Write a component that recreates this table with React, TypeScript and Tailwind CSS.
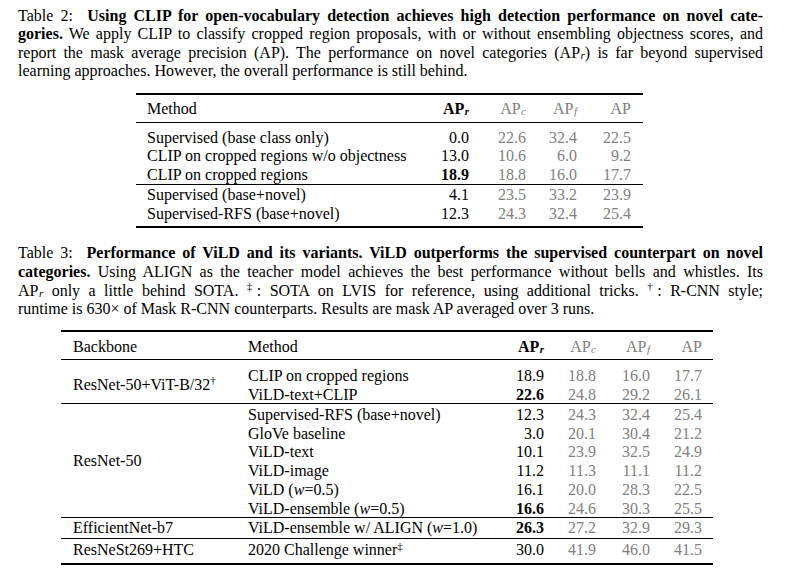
import React from "react";

const G = "text-[#808080]";

function Sub({ c }: { c: string }) {
  return <sub className="italic text-[11px] relative top-[1px] align-baseline ml-[0.5px]">{c}</sub>;
}

function AP({ s }: { s: string }) {
  return (
    <span>
      AP<Sub c={s} />
    </span>
  );
}

function Line({ children, last }: { children: React.ReactNode; last?: boolean }) {
  return (
    <div className={last ? "text-left" : "text-justify [text-align-last:justify]"}>{children}</div>
  );
}

type R2 = { m: string; r: string; rb?: boolean; c: string; f: string; a: string };

const t2g1: R2[] = [
  { m: "Supervised (base class only)", r: "0.0", c: "22.6", f: "32.4", a: "22.5" },
  { m: "CLIP on cropped regions w/o objectness", r: "13.0", c: "10.6", f: "6.0", a: "9.2" },
  { m: "CLIP on cropped regions", r: "18.9", rb: true, c: "18.8", f: "16.0", a: "17.7" },
];
const t2g2: R2[] = [
  { m: "Supervised (base+novel)", r: "4.1", c: "23.5", f: "33.2", a: "23.9" },
  { m: "Supervised-RFS (base+novel)", r: "12.3", c: "24.3", f: "32.4", a: "25.4" },
];

function Row2({ row }: { row: R2 }) {
  return (
    <div className="flex h-[18.8px] pt-[1.5px] leading-[18.8px]">
      <div className="w-[294px] pl-[11px] whitespace-nowrap">{row.m}</div>
      <div className={"w-[39px] text-right " + (row.rb ? "font-bold" : "")}>{row.r}</div>
      <div className={"w-[57px] text-right " + G}>{row.c}</div>
      <div className={"w-[51px] text-right " + G}>{row.f}</div>
      <div className={"w-[54px] text-right " + G}>{row.a}</div>
    </div>
  );
}

type R3 = { m: React.ReactNode; r: string; rb?: boolean; c: string; f: string; a: string };

function Row3({ row }: { row: R3 }) {
  return (
    <div className="flex h-[18.75px] pt-[1.5px] leading-[18.75px]">
      <div className="w-[268px] pl-[12px] whitespace-nowrap">{row.m}</div>
      <div className={"w-[40px] text-right " + (row.rb ? "font-bold" : "")}>{row.r}</div>
      <div className={"w-[52px] text-right " + G}>{row.c}</div>
      <div className={"w-[54px] text-right " + G}>{row.f}</div>
      <div className={"w-[52px] text-right " + G}>{row.a}</div>
    </div>
  );
}

function W() {
  return <span className="italic">w</span>;
}

function Group3({
  backbone,
  rows,
  className,
}: {
  backbone: React.ReactNode;
  rows: R3[];
  className?: string;
}) {
  return (
    <div className={"flex " + (className || "")}>
      <div className="w-[175px] pl-[12px] pt-[1.5px] leading-[18.75px] flex items-center whitespace-nowrap">
        {backbone}
      </div>
      <div className="flex flex-col">
        {rows.map((r, i) => (
          <Row3 key={i} row={r} />
        ))}
      </div>
    </div>
  );
}

export default function App() {
  return (
    <div className="w-[798px] h-[575px] bg-white text-black font-['Liberation_Serif','Times_New_Roman',serif] text-[16px] overflow-hidden">
      <div className="pl-[18px] pt-[7px] w-[763px]">
        {/* Caption 2 */}
        <div className="leading-[18.35px] w-[745px]">
          <Line>
            Table 2:&nbsp; <b>Using CLIP for open-vocabulary detection achieves high detection performance on novel cate-</b>
          </Line>
          <Line>
            <b>gories.</b> We apply CLIP to classify cropped region proposals, with or without ensembling objectness scores, and
          </Line>
          <Line>
            report the mask average precision (AP). The performance on novel categories (<AP s="r" />) is far beyond supervised
          </Line>
          <Line last>learning approaches. However, the overall performance is still behind.</Line>
        </div>

        {/* Table 2 */}
        <div className="ml-[118px] mt-[12.5px] w-[507px] border-t-2 border-b-2 border-black pb-[4px]">
          <div className="flex leading-[18.8px] pt-[5.5px] pb-[3px] border-b border-black">
            <div className="w-[294px] pl-[11px]">Method</div>
            <div className="w-[39px] text-right font-bold">
              <AP s="r" />
            </div>
            <div className={"w-[57px] text-right " + G}>
              <AP s="c" />
            </div>
            <div className={"w-[51px] text-right " + G}>
              <AP s="f" />
            </div>
            <div className={"w-[54px] text-right " + G}>AP</div>
          </div>
          <div className="pt-[4px] border-b border-black">
            {t2g1.map((r, i) => (
              <Row2 key={i} row={r} />
            ))}
          </div>
          <div>
            {t2g2.map((r, i) => (
              <Row2 key={i} row={r} />
            ))}
          </div>
        </div>

        {/* Caption 3 */}
        <div className="leading-[18.67px] w-[745px] mt-[16px]">
          <Line>
            Table 3:&nbsp; <b>Performance of ViLD and its variants. ViLD outperforms the supervised counterpart on novel</b>
          </Line>
          <Line>
            <b>categories.</b> Using ALIGN as the teacher model achieves the best performance without bells and whistles. Its
          </Line>
          <Line>
            <AP s="r" /> only a little behind SOTA. <sup className="text-[11px]">‡</sup>: SOTA on LVIS for reference, using additional tricks. <sup className="text-[11px]">†</sup>: R-CNN style;
          </Line>
          <Line last>runtime is 630× of Mask R-CNN counterparts. Results are mask AP averaged over 3 runs.</Line>
        </div>

        {/* Table 3 */}
        <div className="ml-[43px] mt-[11.5px] w-[652px] border-t-2 border-b-2 border-black pb-[3px]">
          <div className="flex leading-[18.8px] pt-[5.3px] pb-[3px] border-b border-black">
            <div className="w-[175px] pl-[12px]">Backbone</div>
            <div className="w-[268px] pl-[12px]">Method</div>
            <div className="w-[40px] text-right font-bold">
              <AP s="r" />
            </div>
            <div className={"w-[52px] text-right " + G}>
              <AP s="c" />
            </div>
            <div className={"w-[54px] text-right " + G}>
              <AP s="f" />
            </div>
            <div className={"w-[52px] text-right " + G}>AP</div>
          </div>
          <Group3
            className="pt-[5px] pb-[0.5px] border-b border-black"
            backbone={
              <span>
                ResNet-50+ViT-B/32<sup className="text-[11px]">†</sup>
              </span>
            }
            rows={[
              { m: "CLIP on cropped regions", r: "18.9", c: "18.8", f: "16.0", a: "17.7" },
              { m: "ViLD-text+CLIP", r: "22.6", rb: true, c: "24.8", f: "29.2", a: "26.1" },
            ]}
          />
          <Group3
            className="border-b border-black"
            backbone="ResNet-50"
            rows={[
              { m: "Supervised-RFS (base+novel)", r: "12.3", c: "24.3", f: "32.4", a: "25.4" },
              { m: "GloVe baseline", r: "3.0", c: "20.1", f: "30.4", a: "21.2" },
              { m: "ViLD-text", r: "10.1", c: "23.9", f: "32.5", a: "24.9" },
              { m: "ViLD-image", r: "11.2", c: "11.3", f: "11.1", a: "11.2" },
              {
                m: (
                  <span>
                    ViLD (<W />=0.5)
                  </span>
                ),
                r: "16.1",
                c: "20.0",
                f: "28.3",
                a: "22.5",
              },
              {
                m: (
                  <span>
                    ViLD-ensemble (<W />=0.5)
                  </span>
                ),
                r: "16.6",
                rb: true,
                c: "24.6",
                f: "30.3",
                a: "25.5",
              },
            ]}
          />
          <Group3
            className="border-b border-black"
            backbone="EfficientNet-b7"
            rows={[
              {
                m: (
                  <span>
                    ViLD-ensemble w/ ALIGN (<W />=1.0)
                  </span>
                ),
                r: "26.3",
                rb: true,
                c: "27.2",
                f: "32.9",
                a: "29.3",
              },
            ]}
          />
          <Group3
            className="pt-[0.5px]"
            backbone="ResNeSt269+HTC"
            rows={[
              {
                m: (
                  <span>
                    2020 Challenge winner<sup className="text-[11px]">‡</sup>
                  </span>
                ),
                r: "30.0",
                c: "41.9",
                f: "46.0",
                a: "41.5",
              },
            ]}
          />
        </div>
      </div>
    </div>
  );
}
